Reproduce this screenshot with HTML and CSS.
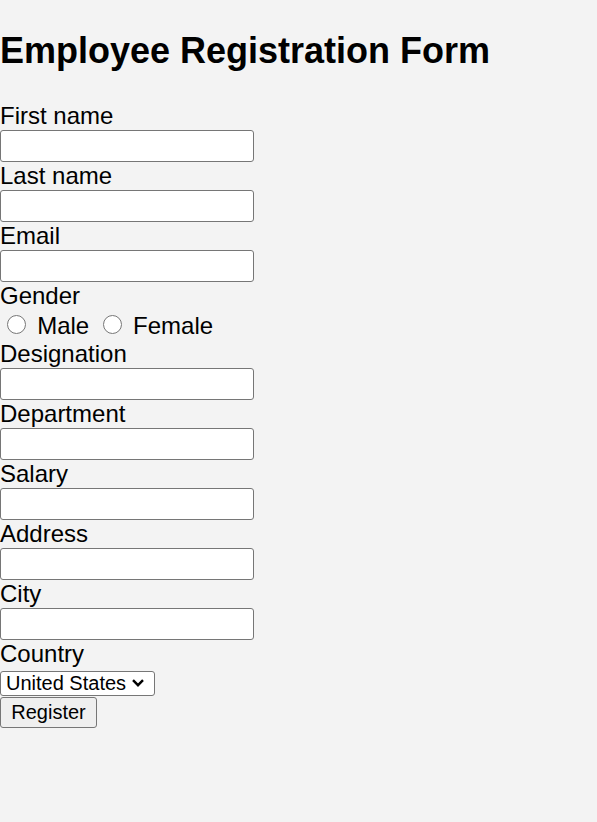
FILE: index.html
```html
<!DOCTYPE html>
<html>
<head>
<meta charset="utf-8">
<title>Employee Registration Form</title>
<link rel="stylesheet" href="styles.css">
</head>
<body>
<h2 class="title">Employee Registration Form</h2>
<form class="form">
  <label class="field-label" for="fn">First name</label>
  <input class="text-input" type="text" id="fn">
  <label class="field-label" for="ln">Last name</label>
  <input class="text-input" type="text" id="ln">
  <label class="field-label" for="em">Email</label>
  <input class="text-input" type="text" id="em">
  <label class="field-label">Gender</label>
  <div class="radio-row"><input class="radio" type="radio" name="g" id="m"> <label for="m">Male</label> <input class="radio" type="radio" name="g" id="f"> <label for="f">Female</label></div>
  <label class="field-label" for="de">Designation</label>
  <input class="text-input" type="text" id="de">
  <label class="field-label" for="dp">Department</label>
  <input class="text-input" type="text" id="dp">
  <label class="field-label" for="sa">Salary</label>
  <input class="text-input" type="text" id="sa">
  <label class="field-label" for="ad">Address</label>
  <input class="text-input" type="text" id="ad">
  <label class="field-label" for="ci">City</label>
  <input class="text-input" type="text" id="ci">
  <label class="field-label" for="co">Country</label>
  <select class="select" id="co">
    <option>United States</option>
    <option>Canada</option>
    <option>United Kingdom</option>
  </select>
  <button class="button" type="button">Register</button>
</form>
</body>
</html>
```

FILE: styles.css
```css
html, body {
  margin: 0;
  padding: 0;
  background: #f3f3f3;
}
body {
  font-family: "Liberation Sans", Arial, sans-serif;
  font-size: 24px;
  color: #000;
}
.title {
  font-size: 36px;
  font-weight: bold;
  margin: 29.9px 0 30.5px 0;
  line-height: normal;
}
.form {
  margin: 0;
}
.field-label {
  display: block;
  font-size: 24px;
  line-height: 28px;
}
.text-input {
  display: block;
  box-sizing: border-box;
  width: 254px;
  height: 32px;
  margin: 0;
  border: 1px solid #767676;
  border-radius: 3px;
  background: #fff;
  font-size: 20px;
  font-family: "Liberation Sans", Arial, sans-serif;
  padding: 1px 3px;
}
.radio-row {
  height: 30px;
  line-height: 27.6px;
  font-size: 24px;
}
.radio {
  width: 19px;
  height: 19px;
  margin: 5px 4.5px 0 7px;
  vertical-align: baseline;
}
.select {
  display: block;
  box-sizing: border-box;
  width: 155px;
  height: 25px;
  margin: 2.5px 0 0 0;
  padding: 0 22px 0 5px;
  font-size: 20px;
  font-family: "Liberation Sans", Arial, sans-serif;
  border: 1px solid #767676;
  border-radius: 3px;
  color: #000;
  -webkit-appearance: none;
  appearance: none;
  background: #fff url("data:image/svg+xml;utf8,<svg xmlns='http://www.w3.org/2000/svg' width='12' height='8' viewBox='0 0 12 8'><path d='M1 1.2 L6 6.2 L11 1.2' fill='none' stroke='black' stroke-width='2.4'/></svg>") no-repeat right 10px center;
}
.button {
  display: block;
  box-sizing: border-box;
  margin: 1px 0 0 0;
  height: 31px;
  width: 97px;
  padding: 1px 10px;
  font-size: 20px;
  font-family: "Liberation Sans", Arial, sans-serif;
  background: #efefef;
  border: 1px solid #767676;
  border-radius: 3px;
  color: #000;
}
```
